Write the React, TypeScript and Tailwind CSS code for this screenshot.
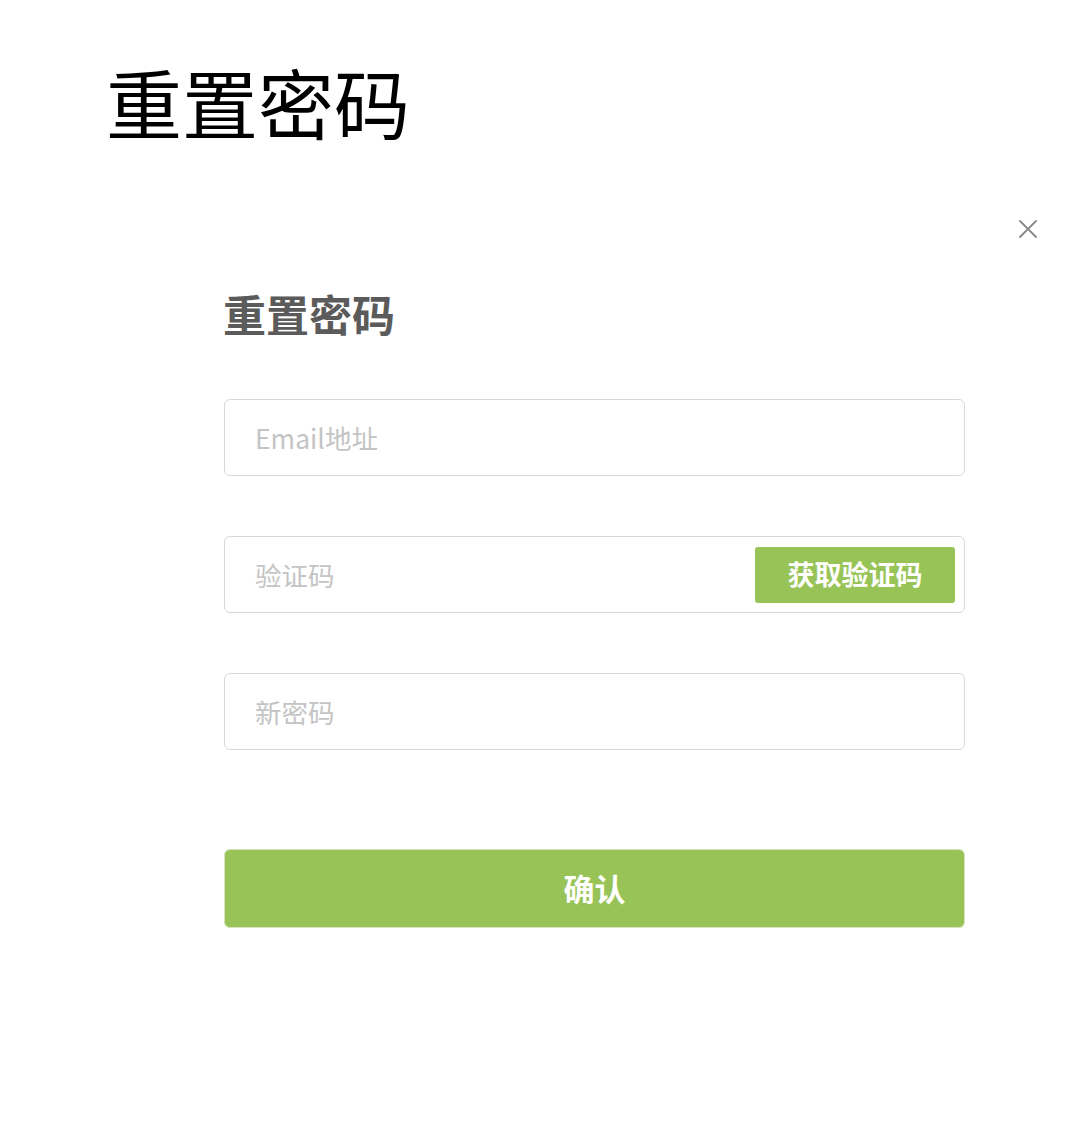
import React from "react";

export default function App() {
  return (
    <div
      className="relative w-[1080px] h-[1129px] bg-white overflow-hidden"
      style={{ fontFamily: '"Noto Sans CJK SC", "Noto Sans", sans-serif' }}
    >
      <div className="pl-[106px] pt-[51px]">
        <h1 className="text-[76px] leading-[100px] font-normal text-black">重置密码</h1>
      </div>
      <button className="absolute left-[1016px] top-[217px] w-[24px] h-[24px] flex items-center justify-center text-[#8a8a8a]">
        <svg width="22" height="22" viewBox="0 0 22 22" fill="none" stroke="currentColor" strokeWidth="1.8" strokeLinecap="round">
          <path d="M3 3L19 19M19 3L3 19" />
        </svg>
      </button>
      <div className="ml-[224px] w-[741px] mt-[134px] flex flex-col">
        <h2 className="text-[43px] leading-[56px] font-bold text-[#5b5b5b] ml-[-1px]">重置密码</h2>
        <div className="mt-[58px] h-[77px] border-[1.5px] border-[#d9d9d9] rounded-[6px] flex items-center pl-[30px]">
          <span className="text-[26.5px] text-[#c4c4c4]">Email地址</span>
        </div>
        <div className="mt-[60px] h-[77px] border-[1.5px] border-[#d9d9d9] rounded-[6px] flex items-center pl-[30px] pr-[9px] justify-between">
          <span className="text-[26.5px] text-[#c4c4c4]">验证码</span>
          <div className="w-[200px] h-[56px] bg-[#98c457] rounded-[3px] flex items-center justify-center text-white text-[27px] font-bold">
            获取验证码
          </div>
        </div>
        <div className="mt-[60px] h-[77px] border-[1.5px] border-[#d9d9d9] rounded-[6px] flex items-center pl-[30px]">
          <span className="text-[26.5px] text-[#c4c4c4]">新密码</span>
        </div>
        <button className="mt-[99px] h-[79px] bg-[#98c457] rounded-[6px] border border-[#d4e3c0] flex items-center justify-center text-white text-[31px] font-bold">
          确认
        </button>
      </div>
    </div>
  );
}
